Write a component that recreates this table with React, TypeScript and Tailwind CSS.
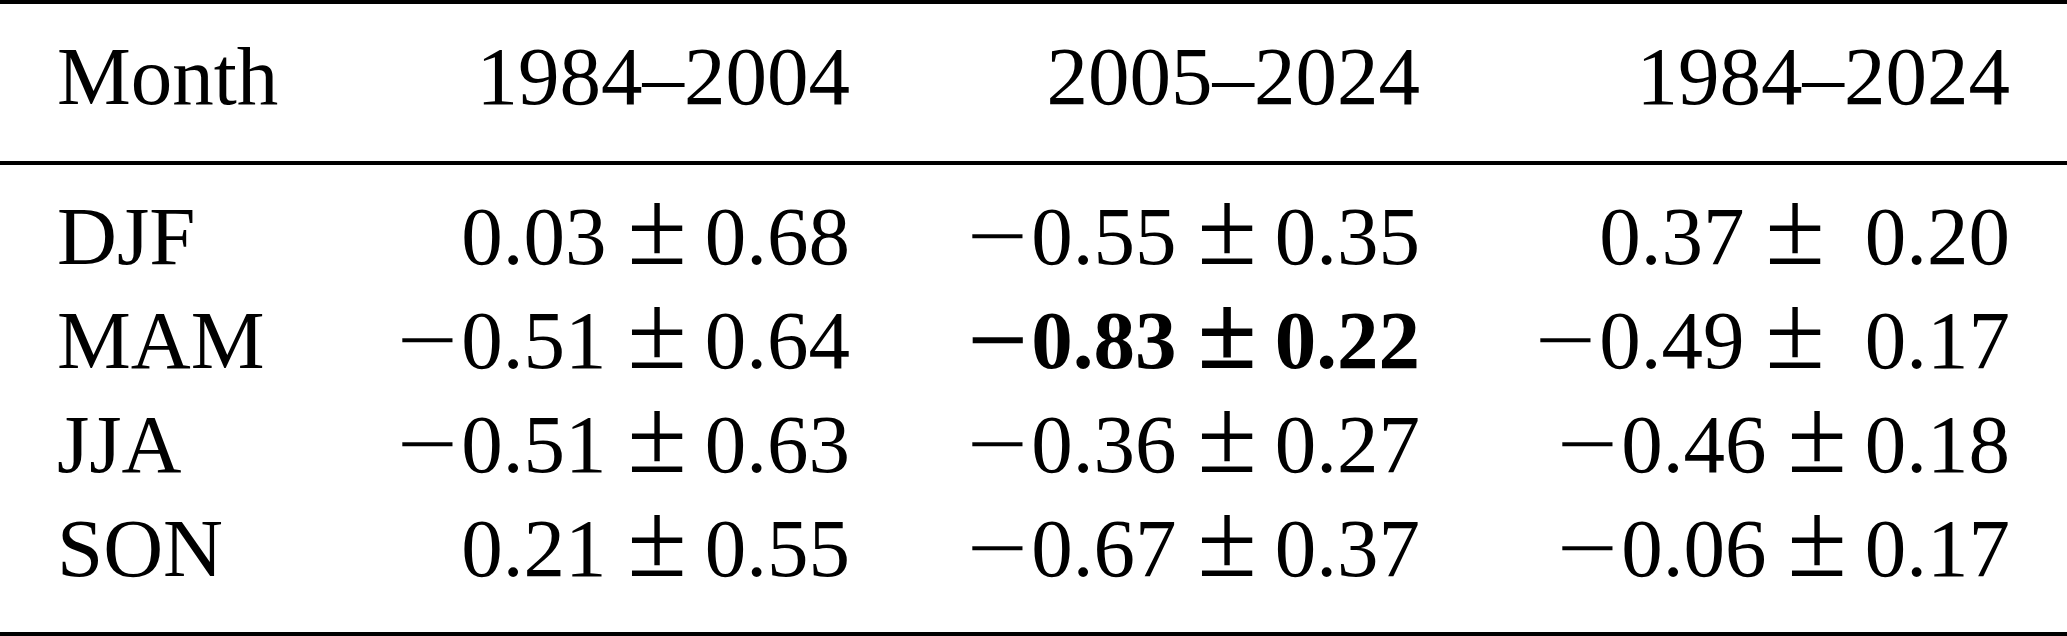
type Cell = { a: string; b: string; bold?: boolean; pad?: boolean };

const rows: { month: string; cells: Cell[] }[] = [
  {
    month: "DJF",
    cells: [
      { a: "0.03", b: "0.68" },
      { a: "−0.55", b: "0.35" },
      { a: "0.37", b: "0.20", pad: true },
    ],
  },
  {
    month: "MAM",
    cells: [
      { a: "−0.51", b: "0.64" },
      { a: "−0.83", b: "0.22", bold: true },
      { a: "−0.49", b: "0.17", pad: true },
    ],
  },
  {
    month: "JJA",
    cells: [
      { a: "−0.51", b: "0.63" },
      { a: "−0.36", b: "0.27" },
      { a: "−0.46", b: "0.18" },
    ],
  },
  {
    month: "SON",
    cells: [
      { a: "0.21", b: "0.55" },
      { a: "−0.67", b: "0.37" },
      { a: "−0.06", b: "0.17" },
    ],
  },
];

const cols = "grid grid-cols-[393px_400px_570px_590px]";

function Value({ cell }: { cell: Cell }) {
  const neg = cell.a.startsWith("−");
  const num = neg ? cell.a.slice(1) : cell.a;
  return (
    <div className={`flex h-[104px] items-baseline justify-end ${cell.bold ? "font-bold" : ""}`}>
      {neg && <span className="ml-[7px] mr-[10px] inline-block scale-x-[1.3]">−</span>}
      <span>{num}</span>
      <span className="ml-[21px] mr-[18px] inline-block text-[108px] leading-[60px]">±</span>
      <span className={cell.pad ? "ml-[22px]" : ""}>{cell.b}</span>
    </div>
  );
}

export default function App() {
  return (
    <div className="h-[636px] w-[2067px] bg-white font-['Liberation_Serif',serif] text-[83px] leading-[104px] text-black">
      <div className="border-y-4 border-black pl-[57px] pr-[57px]">
        <div className={`${cols} pb-[33px] pt-[20px]`}>
          <div>Month</div>
          <div className="text-right">1984–2004</div>
          <div className="text-right">2005–2024</div>
          <div className="text-right">1984–2024</div>
        </div>
      </div>
      <div className="border-b-4 border-black pb-[32px] pl-[57px] pr-[57px] pt-[19px]">
        {rows.map((r) => (
          <div key={r.month} className={cols}>
            <div>{r.month}</div>
            {r.cells.map((c, i) => (
              <Value key={i} cell={c} />
            ))}
          </div>
        ))}
      </div>
    </div>
  );
}
